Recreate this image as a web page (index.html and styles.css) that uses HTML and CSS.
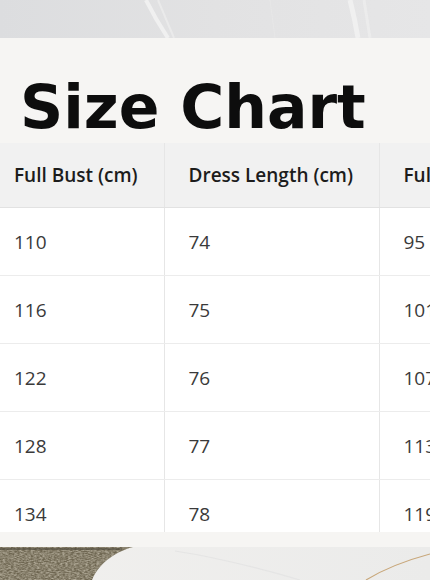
FILE: index.html
```html
<!DOCTYPE html>
<html lang="en">
<head>
<meta charset="utf-8">
<title>Size Chart</title>
<link rel="stylesheet" href="styles.css">
</head>
<body>
<div class="page">
  <div class="marble-top">
    <svg class="deco" width="430" height="38" viewBox="0 0 430 38" aria-hidden="true">
      <defs>
        <linearGradient id="tg" x1="0" y1="0" x2="1" y2="0">
          <stop offset="0" stop-color="#dcdddf"/>
          <stop offset="0.5" stop-color="#e2e2e3"/>
          <stop offset="1" stop-color="#e6e6e7"/>
        </linearGradient>
      </defs>
      <rect width="430" height="38" fill="url(#tg)"/>
      <path d="M146 0 C152 12 160 26 168 38" stroke="#f4f4f4" stroke-width="4" fill="none" opacity="0.8"/>
      <path d="M158 0 C163 12 168 24 174 38" stroke="#eeeeee" stroke-width="2" fill="none" opacity="0.7"/>
      <path d="M350 0 C353 12 356 26 358 38" stroke="#f3f3f3" stroke-width="5" fill="none" opacity="0.8"/>
      <path d="M364 0 C366 12 368 26 370 38" stroke="#f0f0f0" stroke-width="3" fill="none" opacity="0.6"/>
      <path d="M270 0 L275 38" stroke="#e9e9e9" stroke-width="1" fill="none" opacity="0.6"/>
    </svg>
  </div>
  <section class="card">
    <h1 class="title">Size Chart</h1>
    <div class="table-wrap">
      <table class="chart">
        <colgroup>
          <col class="c1"><col class="c2"><col class="c3"><col class="c4">
        </colgroup>
        <thead>
          <tr><th>Full Bust (cm)</th><th>Dress Length (cm)</th><th>Full Waist (cm)</th><th>Sleeve (cm)</th></tr>
        </thead>
        <tbody>
          <tr><td>110</td><td>74</td><td>95</td><td>20</td></tr>
          <tr><td>116</td><td>75</td><td>101</td><td>20</td></tr>
          <tr><td>122</td><td>76</td><td>107</td><td>21</td></tr>
          <tr><td>128</td><td>77</td><td>113</td><td>21</td></tr>
          <tr><td>134</td><td>78</td><td>119</td><td>22</td></tr>
        </tbody>
      </table>
    </div>
  </section>
  <div class="marble-bottom">
    <svg class="deco" width="430" height="33" viewBox="0 0 430 33" aria-hidden="true">
      <defs>
        <filter id="grain" x="0" y="0" width="100%" height="100%">
          <feTurbulence type="fractalNoise" baseFrequency="0.35 0.9" numOctaves="2" seed="4"/>
          <feColorMatrix type="matrix" values="0 0 0 0 0.93  0 0 0 0 0.88  0 0 0 0 0.76  0 0 0 0.9 -0.25"/>
          <feComposite in2="SourceGraphic" operator="in"/>
        </filter>
        <linearGradient id="bg2" x1="0" y1="0" x2="1" y2="0">
          <stop offset="0" stop-color="#f1f0ee"/>
          <stop offset="1" stop-color="#ebebea"/>
        </linearGradient>
      </defs>
      <rect width="430" height="33" fill="url(#bg2)"/>
      <path d="M0 0 H133 C118 4 100 14 92 33 H0 Z" fill="#6e6651"/>
      <path d="M0 0 H133 C118 4 100 14 92 33 H0 Z" fill="#6e6651" filter="url(#grain)"/>
      <path d="M0 2 H122" stroke="#4f4a3c" stroke-width="2" opacity="0.6"/>
      <path d="M175 4 C215 10 255 20 300 33" stroke="#e2e2e2" stroke-width="1.2" fill="none" opacity="0.8"/>
      <path d="M366 33 C384 22 404 14 430 7" stroke="#c8a77a" stroke-width="1.2" fill="none"/>
    </svg>
  </div>
</div>
</body>
</html>
```

FILE: styles.css
```css
html, body {
  margin: 0;
  padding: 0;
  background: #efeeec;
}

.page {
  width: 430px;
  height: 580px;
  overflow: hidden;
  display: flex;
  flex-direction: column;
}

.marble-top {
  height: 38px;
  flex: none;
}

.deco {
  display: block;
}

.card {
  flex: none;
  height: 509px;
  box-sizing: border-box;
  padding-top: 39px;
  background: #f6f5f3;
  overflow: hidden;
  display: flex;
  flex-direction: column;
}

.title {
  margin: 0 0 6px 20px;
  font-family: "DejaVu Sans", sans-serif;
  font-weight: 700;
  font-size: 60px;
  line-height: 60px;
  color: #0d0d0d;
  letter-spacing: 0;
}

.table-wrap {
  height: 389px;
  overflow: hidden;
  flex: none;
}

.chart {
  margin-left: -10px;
  border-collapse: collapse;
  table-layout: fixed;
  width: 780px;
  font-family: "Open Sans", sans-serif;
  font-size: 19px;
}

.c1 { width: 174px; }
.c2 { width: 215px; }
.c3 { width: 200px; }
.c4 { width: 191px; }

.chart th,
.chart td {
  padding: 0 0 0 24px;
  text-align: left;
  vertical-align: middle;
  border-right: 1px solid #e6e6e6;
  border-bottom: 1px solid #ececec;
}

.chart th {
  height: 64px;
  background: #f1f1f1;
  font-weight: 600;
  color: #1c1c1c;
  border-bottom-color: #e2e2e2;
}

.chart td {
  height: 67px;
  background: #ffffff;
  font-weight: 400;
  color: #3a3a3a;
}
```
